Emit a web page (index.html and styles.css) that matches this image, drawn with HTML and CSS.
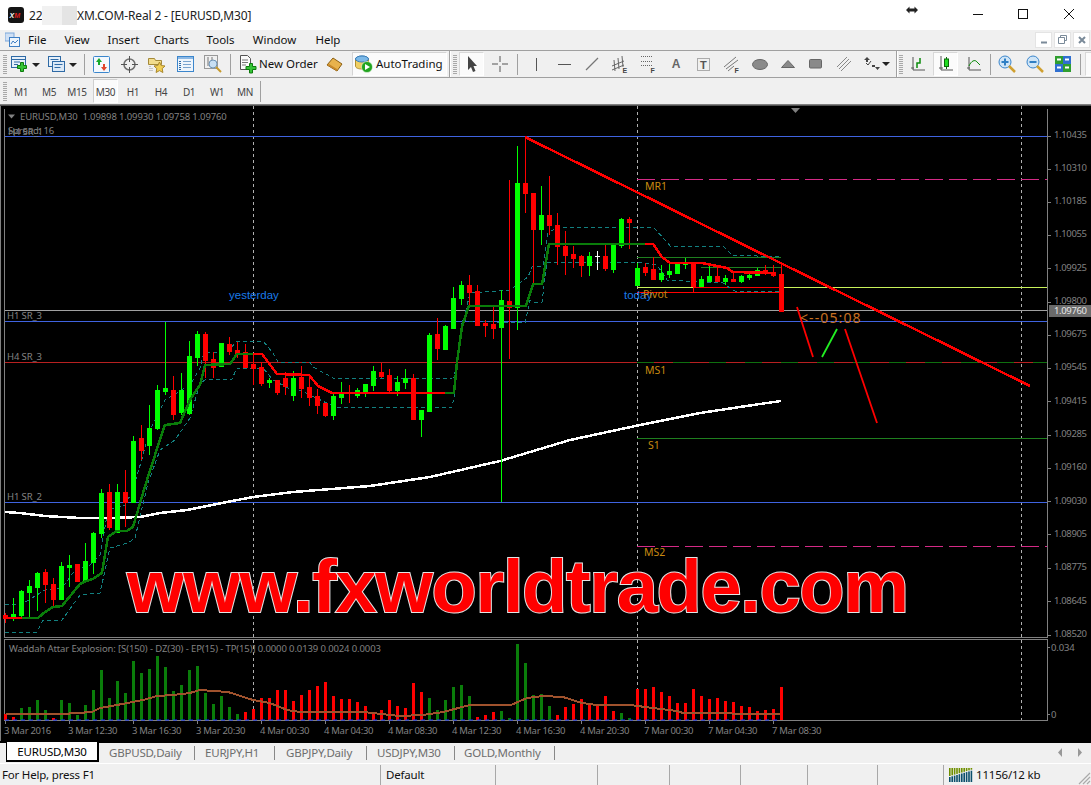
FILE: index.html
```html
<!DOCTYPE html>
<html lang="en">
<head>
<meta charset="utf-8">
<title>22 XM.COM-Real 2 - [EURUSD,M30]</title>
<link rel="stylesheet" href="styles.css">
</head>
<body>
<div class="app">
  <header class="titlebar">
    <svg class="logo" width="16" height="16" viewBox="0 0 16 16"><rect width="16" height="16" rx="3" fill="#141414"/><text x="1.5" y="11" class="logo-text">X<tspan fill="#e02020">M</tspan></text></svg>
    <span class="title-a">22</span><span class="redact"></span><span class="title-b">XM.COM-Real 2 - [EURUSD,M30]</span>
    <svg class="resize-cursor" width="12" height="8" viewBox="0 0 12 8"><path d="M0 4l3.500-3.500v2h5v-2l3.500 3.500-3.500 3.500v-2h-5v2z" fill="#222"/></svg>
    <div class="winctl">
      <span class="winbtn"><svg width="10" height="10"><path d="M0 5.500h10" stroke="#111"/></svg></span>
      <span class="winbtn wide"><svg width="10" height="10"><rect x=".5" y=".5" width="9" height="9" fill="none" stroke="#111"/></svg></span>
      <span class="winbtn"><svg width="10" height="10"><path d="M0 0l10 10M10 0l-10 10" stroke="#111"/></svg></span>
    </div>
  </header>

  <nav class="menubar">
    <svg class="menu-icon" width="15" height="15" viewBox="0 0 15 15"><rect x="0" y="1" width="9" height="8" fill="#cfe0f5" stroke="#7da7d9"/><rect x="4.500" y="5.500" width="10" height="9" fill="#eef5fc" stroke="#3f7fc4"/><path d="M6 12l2-3 2 2 3-3" fill="none" stroke="#3f7fc4"/></svg>
    <span class="menu-item file">File</span>
    <span class="menu-item view">View</span>
    <span class="menu-item insert">Insert</span>
    <span class="menu-item charts">Charts</span>
    <span class="menu-item tools">Tools</span>
    <span class="menu-item window">Window</span>
    <span class="menu-item help">Help</span>
    <div class="mdi">
      <span class="mdi-btn"><svg width="8" height="8"><path d="M1 6.500h6" stroke="#7a8a99" stroke-width="2"/></svg></span>
      <span class="mdi-btn"><svg width="9" height="9"><path d="M2.500 2.500v-2h6v5h-2M.500 2.500h6v6h-6z" fill="none" stroke="#7a8a99"/></svg></span>
      <span class="mdi-btn"><svg width="8" height="8"><path d="M1 1l6 6M7 1l-6 6" stroke="#7a8a99" stroke-width="2"/></svg></span>
    </div>
  </nav>

  <div class="toolbar">
    <span class="grip"></span>
    <span class="tb w25"><svg width="18" height="18" viewBox="0 0 18 18"><rect x=".5" y="1.500" width="14" height="11" fill="#e6f0fa" stroke="#2f6aa5"/><path d="M.5 4.500h14M3 7h6M3 9.500h4" stroke="#2f6aa5" fill="none"/><path d="M9.500 7.500h3v3h3v3h-3v3h-3v-3h-3v-3h3z" fill="#35c435" stroke="#0d7a0d"/></svg></span>
    <span class="drop"></span>
    <span class="tb w25 gap4"><svg width="18" height="18" viewBox="0 0 18 18"><rect x=".5" y="1.500" width="12" height="10" fill="#e6f0fa" stroke="#2f6aa5"/><rect x="4.500" y="6.500" width="12" height="10" fill="#dbe9f7" stroke="#2f6aa5"/><path d="M2.500 4.500h8M6.500 9.500h8M6.500 12.500h6" stroke="#2f6aa5" fill="none"/></svg></span>
    <span class="drop"></span>
    <span class="sep sep7"></span>
    <span class="tb gap2"><svg width="17" height="17" viewBox="0 0 17 17"><rect x=".5" y=".5" width="16" height="16" rx="1" fill="#f3f8fd" stroke="#3b86cc"/><path d="M6 2l3 4h-2v3h-2v-3h-2z" fill="#17a92b"/><path d="M11 15l-3-4h2v-3h2v3h2z" fill="#e0452c"/></svg></span>
    <span class="tb"><svg width="17" height="17" viewBox="0 0 17 17"><circle cx="8.500" cy="8.500" r="5.500" fill="none" stroke="#707070" stroke-width="1.500"/><path d="M8.500 0v6M8.500 11v6M0 8.500h6M11 8.500h6" stroke="#555"/></svg></span>
    <span class="tb"><svg width="18" height="17" viewBox="0 0 18 17"><path d="M.5 2.500h6l1 2h6v4h-13z" fill="#f2dc8c" stroke="#a58a3a"/><path d="M11.500 6l1.700 3.500 3.800.5-2.800 2.600.7 3.900-3.400-1.900-3.400 1.900.7-3.900-2.800-2.600 3.800-.5z" fill="#f2cf55" stroke="#a9872a"/><path d="M2 10v5M4 12v3" stroke="#999" stroke-dasharray="1 1"/></svg></span>
    <span class="tb"><svg width="17" height="16" viewBox="0 0 17 16"><rect x=".5" y=".5" width="16" height="15" fill="#eef5fc" stroke="#3b86cc"/><rect x="1" y="1" width="15" height="2" fill="#8cb8e4"/><path d="M3 5v9" stroke="#2f6aa5" stroke-width="2" stroke-dasharray="1 1"/><path d="M6 5.500h8M6 8.500h8M6 11.500h8" stroke="#7aa4cf"/></svg></span>
    <span class="tb"><svg width="18" height="18" viewBox="0 0 18 18"><rect x=".5" y=".5" width="13" height="13" fill="#f0f0f0" stroke="#999"/><path d="M4 2v9M8 2v9" stroke="#777"/><circle cx="9" cy="9" r="4" fill="#c8dff3" stroke="#6e93b5"/><path d="M12 12l5 5" stroke="#c79a2d" stroke-width="2"/></svg></span>
    <span class="sep sep3"></span>
    <span class="tb-text neworder"><svg width="18" height="19" viewBox="0 0 18 19"><path d="M1.500.5h7l3 3v11h-10z" fill="#fbfbfb" stroke="#555"/><path d="M3 5h6M3 7.500h6M3 10h4" stroke="#777"/><path d="M10.500 8.500h3v3h3.500v3h-3.500v3.500h-3v-3.500h-3.500v-3h3.500z" fill="#35c435" stroke="#0d7a0d"/></svg><span>New Order</span></span>
    <span class="tb"><svg width="17" height="15" viewBox="0 0 17 15"><path d="M1 8l6-7 9 6-5 7z" fill="#e8b24c" stroke="#8a5f12"/><path d="M1 8l10 6v-2l-8-5z" fill="#c7872a"/></svg></span>
    <span class="tb-text auto"><svg width="18" height="18" viewBox="0 0 18 18"><ellipse cx="7" cy="4" rx="6.500" ry="3" fill="#7cb9e8" stroke="#3b7fb8"/><path d="M.5 4v7c0 2 3 3 6.500 3s6.500-1 6.500-3v-7" fill="#f0cf63" stroke="#b18f2e"/><ellipse cx="7" cy="4" rx="6.500" ry="3" fill="#7cb9e8" stroke="#3b7fb8"/><circle cx="12" cy="12" r="5.500" fill="#22a41f" stroke="#fff" stroke-width=".5"/><path d="M10 9l5 3-5 3z" fill="#fff"/></svg><span>AutoTrading</span></span>
    <span class="sep-full"></span>
    <span class="grip g2"></span>
    <span class="tb w25 gap2 on"><svg width="10" height="16" viewBox="0 0 10 16"><path d="M1 0v14l3-3 2 5 2.500-1-2-5h3.500z" fill="#444"/></svg></span>
    <span class="tb gap2"><svg width="16" height="16" viewBox="0 0 16 16"><path d="M8 0v6M8 10v6M0 8h6M10 8h6" stroke="#555"/></svg></span>
    <span class="sep sep3"></span>
    <span class="tb gap4"><svg width="16" height="16"><path d="M8.500 2v13" stroke="#555" stroke-width="1"/></svg></span>
    <span class="tb"><svg width="16" height="16"><path d="M2 8.500h13" stroke="#555"/></svg></span>
    <span class="tb"><svg width="16" height="16"><path d="M2 14l12-12" stroke="#777" stroke-width="1.200"/></svg></span>
    <span class="tb"><svg width="16" height="18" viewBox="0 0 16 18"><path d="M0 11l12-5M0 15l12-5M2 5l1 11M6 3l1 11M10 1l1 11" stroke="#666" fill="none"/><text x="10.500" y="17.500" class="tool-letter">E</text></svg></span>
    <span class="tb"><svg width="16" height="18" viewBox="0 0 16 18"><path d="M1 1.500h12M1 6.500h12M1 10.500h12" stroke="#666" stroke-dasharray="1 1"/><text x="10.500" y="17.500" class="tool-letter">F</text></svg></span>
    <span class="tb"><span class="tool-a">A</span></span>
    <span class="tb"><svg width="14" height="15" viewBox="0 0 14 15"><rect x=".5" y="1.500" width="12" height="12" fill="none" stroke="#666" stroke-dasharray="1 1"/><text x="3" y="11.500" class="tool-t">T</text></svg></span>
    <span class="tb"><svg width="16" height="18" viewBox="0 0 16 18"><path d="M0 12l12-10M2 14l12-9M4 16l6-5" stroke="#777" fill="none"/><text x="10.500" y="17.500" class="tool-letter">F</text></svg></span>
    <span class="tb"><svg width="16" height="11"><ellipse cx="8" cy="5.500" rx="7.500" ry="5" fill="#8a8a8a" stroke="#666"/></svg></span>
    <span class="tb"><svg width="14" height="8"><path d="M7 .5l6.500 7h-13z" fill="#8a8a8a" stroke="#666"/></svg></span>
    <span class="tb"><svg width="14" height="10"><rect x=".5" y=".5" width="12" height="8.500" rx="1" fill="#8a8a8a" stroke="#666"/></svg></span>
    <span class="tb"><svg width="14" height="14"><path d="M0 10l10-10M2 12l10-10M4 14l10-10" stroke="#888" fill="none"/></svg></span>
    <span class="tb narrow"><svg width="16" height="14" viewBox="0 0 16 14"><path d="M3 0l3 3h-2v2h-2v-2h-2z" fill="#444"/><path d="M2 6l2 2 3-4" stroke="#444" fill="none"/><path d="M11 10h5l-2.500 3zM8 8h3v2h-3z" fill="#444"/></svg></span>
    <span class="drop small"></span>
    <span class="sep-full gap6"></span>
    <span class="grip g1"></span>
    <span class="tb w26 gap2"><svg width="14" height="14" viewBox="0 0 14 14"><path d="M2 0v13h12M0 11h3" stroke="#555" fill="none"/><path d="M6 11v-5h3v-5" stroke="#0a8a0a" stroke-width="1.500" fill="none"/></svg></span>
    <span class="tb w25 gap2 on"><svg width="14" height="16" viewBox="0 0 14 16"><path d="M2 0v14h12M0 12h4" stroke="#555" fill="none"/><path d="M7.500 1v12" stroke="#0a6b0a"/><rect x="5.500" y="3" width="4" height="7.500" fill="#22dd22" stroke="#0a6b0a"/></svg></span>
    <span class="tb gap2"><svg width="14" height="14" viewBox="0 0 14 14"><path d="M2 0v13h12M0 11h3" stroke="#555" fill="none"/><path d="M2 9c2-5 6-7 8-4l3 3" stroke="#0a8a0a" fill="none"/></svg></span>
    <span class="sep sep2"></span>
    <span class="tb gap2"><svg width="18" height="18" viewBox="0 0 18 18"><circle cx="7" cy="7" r="6" fill="#cfe5f7" stroke="#3b86cc"/><path d="M3.500 7h7M7 3.500v7" stroke="#2f7fc4" stroke-width="2"/><path d="M11 11l6 6" stroke="#d0a030" stroke-width="2.500"/></svg></span>
    <span class="tb"><svg width="18" height="18" viewBox="0 0 18 18"><circle cx="7" cy="7" r="6" fill="#cfe5f7" stroke="#3b86cc"/><path d="M3.500 7h7" stroke="#2f7fc4" stroke-width="2"/><path d="M11 11l6 6" stroke="#d0a030" stroke-width="2.500"/></svg></span>
    <span class="tb"><svg width="16" height="16" viewBox="0 0 16 16"><rect width="8" height="8" fill="#2f9e2f"/><rect x="8" width="8" height="8" fill="#2f6fd0"/><rect y="8" width="8" height="8" fill="#2f6fd0"/><rect x="8" y="8" width="8" height="8" fill="#2f9e2f"/><path d="M2 3.500h4M10 3.500h4M2 11.500h4M10 11.500h4" stroke="#fff" stroke-width="2"/></svg></span>
    <span class="sep sep3"></span>
    <span class="tb w25 gap4 on"></span>
  </div>

  <div class="tfbar">
    <span class="grip"></span>
    <span class="tf">M1</span>
    <span class="tf">M5</span>
    <span class="tf">M15</span>
    <span class="tf active">M30</span>
    <span class="tf">H1</span>
    <span class="tf">H4</span>
    <span class="tf">D1</span>
    <span class="tf">W1</span>
    <span class="tf">MN</span>
    <span class="sep sep1"></span>
  </div>

  <svg class="chart" width="1091" height="636" viewBox="0 105 1091 636">
    <rect x="0" y="105" width="1091" height="636" fill="#000"/>
    <path class="frame" d="M.5 105v636M4.500 109v528.500h1043v-528.500M4.500 639.500h1043v81h-1043z"/>
    <path class="frame-top" d="M0 105.500h1091"/>
    <path class="ticks" id="ticks"/>
    <path class="marker" d="M791 108h9l-4.500 5z"/>

    <path class="grid" d="M253.500 106v614M637.500 106v614M1021.500 106v614"/>

    <path class="hl blue" d="M5 136.500h1042M5 321.500h1042M5 502.500h1042"/>
    <path class="hl grey" d="M5 310.500h1042"/>
    <path class="hl brick" d="M5 362.500h1042"/>
    <path class="hl dash-pink" d="M637 179.500h410M637 546.500h410"/>
    <path class="hl dash-green" d="M637 362.500h410"/>
    <path class="hl lime" d="M637 287.500h410"/>
    <path class="hl dgreen" d="M637 438.500h410M637 257.500h144M701 267.500h80"/>
    <path class="hl red1" d="M637 292.500h144M693 287.500h88"/>

    <polyline class="band" points="5,604 22,604 32,598 45,590 62,588 75,570 90,565 100,555 108,510 125,505 133,490 143,455 150,430 165,400 190,385 200,368 204,352 227,352 237,341 263,341 273,353 278,362 310,362 313,367 335,379 453,378 457,367 462,327 470,293 483,292 510,290 528,277 532,267 543,266 548,233 558,227 653,227 667,242 670,246 723,246 732,255 781,257"/>
    <polyline class="band" points="5,632 37,632 43,620 62,620 80,595 100,593 110,548 128,543 135,538 148,483 160,450 175,440 190,418 200,383 207,379 232,379 237,368 263,368 273,380 290,389 297,389 310,395 335,407 452,407 454,397 457,360 462,320 467,321 525,323 530,300 533,302 542,302 547,262 637,262 657,265 667,280 723,283 730,288 735,291 780,291"/>

    <polyline class="white-ma" points="5,512 20,513 45,516 80,518 110,518 140,517 160,513 187,510 227,502 253,497 293,492 370,486 430,477 500,461 570,440 640,425 700,413 760,404 781,401"/>

    <path class="wick-g" id="gw"/>
    <path class="body-g" id="gb"/>
    <path class="wick-r" id="rw"/>
    <path class="body-r" id="rb"/>
    <path class="wick-w" d="M597.500 251v19M595 256.500h5"/>

    <polyline class="ma-g" points="22,618 38,618 45,612 53,607 62,606 80,584 86,581 93,579 102,573 108,537 117,531 127,531 133,527 143,493 147,480 155,455 165,425 180,423 190,400 200,385 205,365 230,364 237,354 253,354"/>
    <polyline class="ma-r" points="5,618 22,618"/>
    <polyline class="ma-r" points="253,354 262,354 277,374 309,375 318,386 332,393 445,393"/>
    <polyline class="ma-g" points="445,393 454,393 457,362 462,327 469,306 526,306 533,284 542,284 549,244 645,244"/>
    <polyline class="ma-r" points="645,244 653,244 662,257 670,263 702,263 727,268 733,272 775,273"/>

    <polyline class="trend" points="525,137 1030,386"/>
    <polyline class="arrow-r" points="797,307 813,357"/>
    <polyline class="arrow-g" points="822,357 837,329"/>
    <polyline class="arrow-r" points="845,329 877,423"/>

    <text class="lbl" x="20" y="120">EURUSD,M30  1.09898 1.09930 1.09758 1.09760</text>
    <path class="lbl-fill" d="M8 114.500h7l-3.500 4z"/>
    <text class="lbl" x="8" y="134">Spread: 16</text>
    <text class="lbl" x="8" y="134.500">H4 SR_1</text>
    <text class="lbl" x="7" y="319">H1 SR_3</text>
    <text class="lbl" x="7" y="360">H4 SR_3</text>
    <text class="lbl" x="7" y="500">H1 SR_2</text>
    <text class="day" x="229" y="299">yesterday</text>
    <text class="day" x="624" y="299">today</text>
    <text class="piv" x="643" y="298">Pivot</text>
    <text class="piv" x="645" y="190">MR1</text>
    <text class="piv" x="645" y="374">MS1</text>
    <text class="piv" x="648" y="449">S1</text>
    <text class="piv" x="644" y="556">MS2</text>
    <text class="timer" x="800" y="323">&lt;--05:08</text>

    <text class="big" x="127" y="612" textLength="782" lengthAdjust="spacing">www.fxworldtrade.com</text>

    <g class="axis">
      <text x="1054" y="138">1.10435</text>
      <text x="1054" y="171">1.10310</text>
      <text x="1054" y="204">1.10185</text>
      <text x="1054" y="237">1.10055</text>
      <text x="1054" y="271">1.09925</text>
      <text x="1054" y="304">1.09800</text>
      <text x="1054" y="337">1.09675</text>
      <text x="1054" y="370">1.09545</text>
      <text x="1054" y="404">1.09415</text>
      <text x="1054" y="437">1.09285</text>
      <text x="1054" y="470">1.09160</text>
      <text x="1054" y="504">1.09030</text>
      <text x="1054" y="537">1.08905</text>
      <text x="1054" y="570">1.08775</text>
      <text x="1054" y="604">1.08645</text>
      <text x="1054" y="637">1.08520</text>
    </g>
    <rect class="price-box" x="1049" y="305" width="42" height="12"/>
    <text class="price-text" x="1054" y="314">1.09760</text>

    <text class="lbl" x="9" y="652">Waddah Attar Explosion: [S(150) - DZ(30) - EP(15) - TP(15)] 0.0000 0.0139 0.0024 0.0003</text>
    <path class="bar-g" id="barg"/>
    <path class="bar-r" id="barr"/>
    <path class="zero" d="M5 720h776"/>
    <polyline class="sig" points="6,714 62,714 92,712 100,708 117,705 143,700 157,696 173,695 190,693 200,690 228,692 253,700 270,703 287,710 300,712 363,712 400,716 423,715 443,712 470,705 511,705 527,698 543,696 563,697 582,703 597,705 630,705 653,708 677,711 683,713 780,714"/>
    <text class="lbl" x="1051" y="651">0.034</text>
    <text class="lbl" x="1051" y="718">0</text>
    <g class="axis time">
      <text x="4" y="734">3 Mar 2016</text>
      <text x="68" y="734">3 Mar 12:30</text>
      <text x="132" y="734">3 Mar 16:30</text>
      <text x="196" y="734">3 Mar 20:30</text>
      <text x="260" y="734">4 Mar 00:30</text>
      <text x="324" y="734">4 Mar 04:30</text>
      <text x="388" y="734">4 Mar 08:30</text>
      <text x="452" y="734">4 Mar 12:30</text>
      <text x="516" y="734">4 Mar 16:30</text>
      <text x="580" y="734">4 Mar 20:30</text>
      <text x="644" y="734">7 Mar 00:30</text>
      <text x="708" y="734">7 Mar 04:30</text>
      <text x="772" y="734">7 Mar 08:30</text>
    </g>
  </svg>

  <div class="tabs">
    <span class="tab active">EURUSD,M30</span>
    <span class="tab t1">GBPUSD,Daily</span>
    <span class="tab t2">EURJPY,H1</span>
    <span class="tab t3">GBPJPY,Daily</span>
    <span class="tab t4">USDJPY,M30</span>
    <span class="tab t5">GOLD,Monthly</span>
    <span class="tab-arrows"><svg width="24" height="9" viewBox="0 0 24 9"><path d="M4 0v9l-4-4.500zM20 0v9l4-4.500z" fill="#999"/></svg></span>
  </div>

  <footer class="status">
    <span class="st help-text">For Help, press F1</span>
    <span class="st def">Default</span>
    <span class="st s1"></span>
    <span class="st s2"></span>
    <span class="st s3"></span>
    <span class="st s4"></span>
    <span class="st s5"></span>
    <span class="st s6"></span>
    <span class="st conn">
      <svg width="24" height="14" viewBox="0 0 24 14" id="conn"></svg>
      <span>11156/12 kb</span>
    </span>
    <svg class="resize-grip" width="13" height="13" viewBox="0 0 13 13"><path d="M12 1l-11 11M12 5l-7 7M12 9l-3 3" stroke="#aaa" stroke-width="1.200"/></svg>
  </footer>
</div>
<script src="chart.js"></script>
</body>
</html>
```
FILE: styles.css
```css
* { box-sizing: border-box; }
html, body { margin: 0; padding: 0; }
body { width: 1091px; height: 785px; overflow: hidden; background: #f0f0f0; font-family: "Noto Sans", "Open Sans", sans-serif; }
.app { display: flex; flex-direction: column; width: 1091px; height: 785px; position: relative; overflow: hidden; }

.titlebar { height: 30px; background: #fff; display: flex; align-items: center; padding-left: 8px; font-size: 12px; color: #222; flex: none; }
.logo { margin-right: 5px; }
.logo-text { font: italic bold 7px "Liberation Sans", sans-serif; fill: #fff; }
.title-a { width: 13px; }
.redact { width: 35px; height: 19px; background: linear-gradient(90deg, #f1f1f1 0 58%, #e4e4e4 58%); }
.title-b { letter-spacing: -.15px; }
.resize-cursor { position: absolute; left: 906px; top: 6px; }
.winctl { margin-left: auto; display: flex; height: 30px; }
.winbtn { width: 45px; display: flex; align-items: center; justify-content: center; padding-bottom: 2px; }
.winbtn.wide { width: 46px; }

.menubar { height: 20px; background: #f0f0f0; display: flex; align-items: center; padding: 0 0 1px 5px; font-size: 11.500px; color: #111; flex: none; }
.menu-icon { flex: none; }
.file { margin-left: 8px; }
.view { margin-left: 18px; }
.insert { margin-left: 18px; }
.charts { margin-left: 14.400px; }
.tools { margin-left: 17.500px; }
.window { margin-left: 18.200px; }
.help { margin-left: 19px; }
.mdi { margin-left: auto; display: flex; gap: 2px; padding-right: 1px; }
.mdi-btn { width: 17px; height: 16px; background: #fff; border: 1px solid #e4e4e4; display: flex; align-items: center; justify-content: center; }

.toolbar { height: 28px; border-top: 1px solid #a0a0a0; border-bottom: 1px solid #a0a0a0; padding-left: 3px; display: flex; align-items: center; flex: none; background: #f0f0f0; font-size: 11.500px; color: #111; overflow: hidden; }
.grip { width: 4px; height: 20px; flex: none; background: repeating-linear-gradient(0deg, #a8a8a8 0 1px, #f0f0f0 1px 2px); }
.grip.g2 { margin-left: 2px; }
.grip.g1 { margin-left: 1px; }
.tb { width: 28px; height: 24px; display: flex; align-items: center; justify-content: center; flex: none; }
.tb.w25 { width: 25px; }
.tb.w26 { width: 26px; }
.tb.narrow { width: 24px; padding-left: 4px; }
.tb.gap2 { margin-left: 2px; }
.tb.gap4 { margin-left: 4px; }
.tb.on { background: #fbfbfb; border: 1px solid #d8d8d8; border-right-color: #fff; border-bottom-color: #fff; }
.drop { width: 8px; height: 24px; flex: none; position: relative; }
.drop::after { content: ""; position: absolute; left: 0; top: 11px; border: 4px solid transparent; border-top: 4px solid #222; border-bottom: 0; }
.drop.small::after { top: 10px; }
.sep { width: 1px; height: 21px; background: #a0a0a0; flex: none; }
.sep1 { margin-left: 1px; }
.sep2 { margin-left: 2px; }
.sep3 { margin-left: 3px; }
.sep7 { margin-left: 7px; }
.sep-full { width: 2px; height: 26px; margin-left: 2px; background: linear-gradient(90deg, #a0a0a0 0 1px, #fff 1px); flex: none; }
.sep-full.gap6 { margin-left: 6px; }
.tb-text { display: flex; align-items: center; gap: 2px; height: 24px; flex: none; white-space: nowrap; }
.tb-text svg { flex: none; }
.tb-text span { position: relative; top: -1px; }
.neworder { width: 87px; padding-left: 6px; margin-left: 2px; }
.auto { width: 95px; margin-left: 4px; padding-left: 2px; gap: 3px; background: #fbfbfb; border: 1px solid #d4d4d4; border-right-color: #fff; border-bottom-color: #fff; }
.tool-letter { font: bold 7px "Liberation Sans", sans-serif; fill: #444; }
.tool-t { font: bold 11px "Liberation Sans", sans-serif; fill: #555; }
.tool-a { font: bold 12px "Liberation Sans", sans-serif; color: #666; }

.tfbar { height: 27px; background: #f0f0f0; display: flex; align-items: center; padding-left: 3px; flex: none; border-bottom: 1px solid #808080; }
.tf { width: 28px; height: 24px; padding-top: 1px; display: flex; align-items: center; justify-content: center; font-size: 10px; letter-spacing: -.4px; color: #444; flex: none; }
.tf:first-of-type { margin-left: -1px; }
.tf.active { width: 25px; margin: 0 1px 0 2px; background: #fbfbfb; border: 1px solid #cfcfcf; border-right-color: #fff; border-bottom-color: #fff; }

.chart { display: block; flex: none; background: #000; }
.chart text { white-space: pre; }
.frame { fill: none; stroke: #808080; stroke-width: 1; shape-rendering: crispEdges; }
.frame-top { stroke: #505050; shape-rendering: crispEdges; }
.ticks { stroke: #808080; fill: none; shape-rendering: crispEdges; }
.marker { fill: #808080; }
.grid { stroke: #b0b0b0; stroke-dasharray: 3 3; fill: none; shape-rendering: crispEdges; }
.hl { fill: none; stroke-width: 1; shape-rendering: crispEdges; }
.blue { stroke: #3f63e0; }
.grey { stroke: #a0a0a0; }
.brick { stroke: #b82020; }
.dash-pink { stroke: #d42a86; stroke-dasharray: 18 6; }
.dash-green { stroke: #0f6f0f; stroke-dasharray: 17 19; }
.lime { stroke: #c8f25a; }
.dgreen { stroke: #1f7f1f; }
.red1 { stroke: #f00; }
.band { fill: none; stroke: #128080; stroke-dasharray: 4 3; stroke-width: 1; shape-rendering: crispEdges; }
.white-ma { fill: none; stroke: #fff; stroke-width: 2.500; shape-rendering: crispEdges; }
.wick-g { stroke: #00ff00; fill: none; shape-rendering: crispEdges; }
.body-g { stroke: #00ff00; stroke-width: 5; fill: none; shape-rendering: crispEdges; }
.wick-r { stroke: #f00; fill: none; shape-rendering: crispEdges; }
.body-r { stroke: #f00; stroke-width: 5; fill: none; shape-rendering: crispEdges; }
.wick-w { stroke: #fff; fill: none; shape-rendering: crispEdges; }
.ma-g { fill: none; stroke: #0a7d0a; stroke-width: 2.500; shape-rendering: crispEdges; }
.ma-r { fill: none; stroke: #f00; stroke-width: 2.500; shape-rendering: crispEdges; }
.trend { fill: none; stroke: #f00; stroke-width: 2.500; shape-rendering: crispEdges; }
.arrow-r { fill: none; stroke: #f00; stroke-width: 1.800; }
.arrow-g { fill: none; stroke: #22ee22; stroke-width: 1.800; }
.lbl { font: 9.500px "Noto Sans", "Open Sans", sans-serif; fill: #828282; letter-spacing: -.12px; }
.axis text { font: 9.500px "Noto Sans", "Open Sans", sans-serif; fill: #828282; letter-spacing: -.35px; }
.lbl-fill { fill: #828282; }
.axis.time text { letter-spacing: -.3px; }
.day { font: 11.500px "Liberation Sans", sans-serif; fill: #1a7ae8; }
.piv { font: 10.500px "Noto Sans", sans-serif; fill: #c88a10; }
.timer { font: 14px "Noto Sans", sans-serif; fill: #c87020; letter-spacing: 1.100px; }
.big { font: bold 74px "Liberation Sans", sans-serif; fill: #f00; stroke: #e4e4e4; stroke-width: 2; paint-order: stroke; }
.price-box { fill: #6a6a6a; }
.price-text { font: 9.500px "Noto Sans", sans-serif; fill: #e8e8e8; letter-spacing: -.35px; }
.bar-g { stroke: #0a7d0a; stroke-width: 3; fill: none; shape-rendering: crispEdges; }
.bar-r { stroke: #f00; stroke-width: 3; fill: none; shape-rendering: crispEdges; }
.zero { stroke: #1030ff; stroke-dasharray: 4 4; stroke-width: 1; fill: none; }
.sig { fill: none; stroke: #a0522d; stroke-width: 2; shape-rendering: crispEdges; }

.tabs { height: 22px; flex: none; background: #f0f0f0; border-top: 2px solid #000; display: flex; align-items: center; padding: 0 0 1px 6px; font-size: 11.500px; letter-spacing: -.2px; color: #6e6e6e; }
.tab { height: 20px; display: flex; align-items: center; flex: none; }
.tab.active { width: 93px; margin-top: -1px; justify-content: center; background: #fff; border: 1px solid #000; border-top: 0; border-right-width: 2px; border-bottom-width: 2px; color: #000; }
.tab.t1, .tab.t2, .tab.t3, .tab.t4, .tab.t5 { border-right: 1px solid #888; height: 14px; }
.t1 { width: 96px; padding-left: 10px; }
.t2 { width: 80px; padding-left: 10px; }
.t3 { width: 92px; padding-left: 11px; }
.t4 { width: 88px; padding-left: 10px; }
.t5 { width: 100px; padding-left: 9px; }
.tab-arrows { margin-left: auto; padding-right: 9px; display: flex; }

.status { height: 22px; flex: none; background: #f0f0f0; border-top: 1px solid #fff; display: flex; align-items: center; font-size: 11.500px; letter-spacing: -.2px; color: #111; position: relative; }
.st { height: 20px; display: flex; align-items: center; border-right: 1px solid #a8a8a8; flex: none; }
.help-text { width: 381px; padding-left: 2px; }
.def { width: 115px; padding-left: 5px; }
.s1 { width: 102px; }
.s2 { width: 72px; }
.s3 { width: 71px; }
.s4 { width: 67px; }
.s5 { width: 70px; }
.s6 { width: 66px; }
.conn { border-right: 0; padding-left: 5px; gap: 3px; }
.resize-grip { position: absolute; right: 0; bottom: 0; }
```
FILE: chart.js
```js
// OHLC candles as pixel positions: type, body top, body bottom, high, low. One candle every 8px.
var candles = [
['r',615,618,613,623],['g',614,617,598,621],['g',591,615,590,619],['g',586,592,580,618],['g',573,587,572,611],
['r',572,584,569,603],['r',584,599,578,607],['g',566,599,562,599],['g',565,567,555,587],['r',564,581,564,581],
['g',561,581,543,581],['g',533,562,532,574],['g',493,533,489,538],['r',492,527,484,530],['g',492,532,484,532],
['r',492,502,470,527],['g',441,502,436,502],['r',438,450,425,460],['g',428,445,405,455],['g',390,428,385,430],
['g',388,391,322,395],['r',390,414,376,420],['g',390,412,373,415],['g',356,413,341,415],['g',334,357,331,366],
['r',334,360,332,378],['r',359,367,352,378],['g',343,366,343,367],['r',344,351,337,355],['r',350,353,342,358],
['r',352,367,344,368],['r',364,368,353,385],['r',367,383,362,386],['g',380,382,378,388],['r',380,392,380,395],
['r',378,386,372,395],['g',378,395,371,401],['r',377,388,366,398],['r',387,397,375,406],['r',396,405,389,414],
['r',403,415,403,417],['g',396,415,393,420],['g',393,397,382,404],['r',392,393,385,403],['g',390,395,388,398],
['g',384,391,384,397],['g',371,385,366,391],['r',372,376,363,378],['r',375,390,369,392],['g',382,390,376,396],
['g',378,382,369,389],['r',378,419,374,420],['g',410,419,410,437],['g',335,411,333,412],['r',334,348,318,360],
['g',326,349,325,349],['g',298,328,287,328],['g',285,298,281,305],['r',285,292,275,307],['r',291,325,285,325],
['r',323,325,320,337],['r',324,328,306,339],['g',300,327,290,502],['r',301,307,180,359],['g',183,307,146,330],
['r',183,193,137,213],['r',193,229,193,285],['g',215,229,186,245],['r',215,225,176,235],['r',225,246,213,265],
['r',246,255,231,275],['r',254,258,246,268],['r',256,265,255,277],['g',256,265,252,276],null,
['r',256,268,245,271],['g',245,269,244,273],['g',219,245,218,248],['r',219,222,217,249],['g',268,285,263,285],
['r',267,272,263,276],['r',269,279,257,280],['g',273,279,265,282],['g',271,274,263,278],['g',262,273,262,273],
['g',262,264,258,269],['r',263,286,262,292],['g',279,286,276,287],['g',276,281,266,282],['r',276,281,266,282],
['g',278,281,275,285],['r',279,281,273,281],['g',276,281,275,283],['g',275,277,273,280],['g',270,275,268,276],
['r',270,273,265,275],['r',272,275,265,277],['r',274,311,265,312]
];
// Oscillator bars, read from the reference: positive green, negative red.
var bars = [-238,-246,220,216,195,225,-249,195,204,240,210,165,105,188,138,174,78,114,102,63,96,168,150,105,93,174,207,183,216,237,
-231,-222,-189,-189,-165,-165,-198,-180,-165,-153,-141,-183,-192,-192,-201,-213,-237,-225,-195,-213,-219,-144,-171,
189,225,195,156,150,183,-246,-240,-231,228,249,27,84,180,177,213,-240,-216,-207,-192,-204,-207,-183,-228,234,249,
-162,-162,-156,-171,-183,-204,-204,-162,-183,-192,-189,-198,-201,-213,-216,-228,-225,-222,-156];

var paths = {gw:'', gb:'', rw:'', rb:'', barg:'', barr:''};
candles.forEach(function (c, i) {
  if (!c) return;
  var x = 5.5 + 8 * i;
  paths[c[0] + 'w'] += 'M' + x + ' ' + c[3] + 'V' + c[4];
  paths[c[0] + 'b'] += 'M' + x + ' ' + c[1] + 'V' + (c[2] + 1);
});
bars.forEach(function (v, i) {
  var x = 5.5 + 8 * i, y = 635 + Math.abs(v) / 3;
  paths[v > 0 ? 'barg' : 'barr'] += 'M' + x + ' 720V' + y.toFixed(0);
});
Object.keys(paths).forEach(function (k) { document.getElementById(k).setAttribute('d', paths[k]); });

// Axis tick marks
var tickPath = '';
[136,169,202,235,268,302,335,368,401,435,468,501,534,568,601,635].forEach(function (y) { tickPath += 'M1047 ' + (y + .5) + 'h4'; });
[647,714].forEach(function (y) { tickPath += 'M1047 ' + (y + .5) + 'h3'; });
for (var tx = 5; tx <= 773; tx += 64) tickPath += 'M' + (tx + .5) + ' 721v3';
document.getElementById('ticks').setAttribute('d', tickPath);

// Connection-strength meter in the status bar
var conn = document.getElementById('conn'), svgNS = 'http://www.w3.org/2000/svg';
function meterRect(x, y, h, fill) {
  var r = document.createElementNS(svgNS, 'rect');
  r.setAttribute('x', x); r.setAttribute('y', y); r.setAttribute('width', 1.6); r.setAttribute('height', h); r.setAttribute('fill', fill);
  conn.appendChild(r);
}
for (var n = 0; n < 10; n++) {
  var split = 9 - n * .7;
  meterRect(n * 2.4, 0, split - 1, '#6f8f00');
  meterRect(n * 2.4, split, 14 - split, '#0b4f6c');
}
```
